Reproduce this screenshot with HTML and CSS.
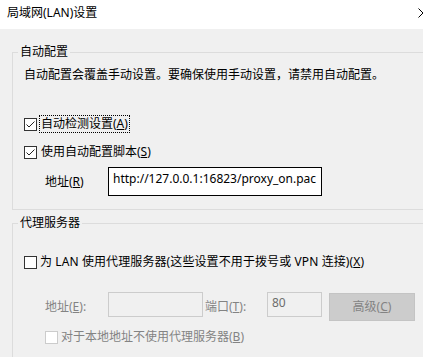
FILE: index.html
```html
<!DOCTYPE html>
<html>
<head>
<meta charset="utf-8">
<title>局域网(LAN)设置</title>
<link rel="stylesheet" href="styles.css">
</head>
<body>
<div class="titlebar">
  <span class="title">局域网(LAN)设置</span>
  <svg class="close" width="5" height="10" viewBox="0 0 5 10"><path d="M0.5 0.5 L9.5 9.5 M9.5 0.5 L0.5 9.5" stroke="#000" stroke-width="1" fill="none"/></svg>
</div>

<div class="main">
  <fieldset class="group auto">
    <legend>自动配置</legend>
    <div class="desc">自动配置会覆盖手动设置。要确保使用手动设置，请禁用自动配置。</div>

    <div class="check row-detect">
      <span class="box"><svg width="11" height="11" viewBox="0 0 11 11"><path d="M1.5 5.5 L4 8 L9.5 2.5" stroke="#222" stroke-width="1" fill="none"/></svg></span>
      <span class="focus">自动检测设置(<u>A</u>)</span>
    </div>

    <div class="check row-script">
      <span class="box"><svg width="11" height="11" viewBox="0 0 11 11"><path d="M1.5 5.5 L4 8 L9.5 2.5" stroke="#222" stroke-width="1" fill="none"/></svg></span>
      <span>使用自动配置脚本(<u>S</u>)</span>
    </div>

    <div class="addr-row">
      <span class="addr-label">地址(<u>R</u>)</span>
      <div class="url">http://127.0.0.1:16823/proxy_on.pac</div>
    </div>
  </fieldset>

  <fieldset class="group proxy">
    <legend>代理服务器</legend>

    <div class="check row-lan">
      <span class="box"></span>
      <span>为 LAN 使用代理服务器(这些设置不用于拨号或 VPN 连接)(<u>X</u>)</span>
    </div>

    <div class="server-row">
      <span class="dim lbl-addr">地址(<u>E</u>):</span>
      <div class="field f-addr"></div>
      <span class="dim lbl-port">端口(<u>T</u>):</span>
      <div class="field f-port">80</div>
      <div class="btn">高级(<u>C</u>)</div>
    </div>

    <div class="check row-local dim">
      <span class="box off"></span>
      <span>对于本地地址不使用代理服务器(<u>B</u>)</span>
    </div>
  </fieldset>
</div>
</body>
</html>
```

FILE: styles.css
```css
html, body {
  margin: 0;
  padding: 0;
}

body {
  width: 423px;
  height: 357px;
  overflow: hidden;
  background: #f0f0f0;
  font-family: "Noto Sans", "Noto Sans CJK SC", sans-serif;
  font-size: 12px;
  line-height: 16px;
  color: #000;
  display: flex;
  flex-direction: column;
}

u {
  text-decoration: underline;
  text-underline-offset: 1px;
}

.titlebar {
  height: 29px;
  flex: none;
  background: #fff;
  display: flex;
  align-items: center;
  justify-content: space-between;
  padding-left: 7px;
  padding-bottom: 3px;
  box-sizing: border-box;
}

.main {
  flex: 1;
  display: flex;
  flex-direction: column;
  padding-left: 12px;
  min-height: 0;
}

.group {
  margin: 0;
  padding: 0 0 0 11px;
  border: 1px solid #dcdcdc;
  border-right: none;
  min-width: 0;
}

.group legend {
  padding: 0 2px;
  margin-left: -6px;
  line-height: 16px;
}

.auto {
  margin-top: 15px;
  padding-bottom: 13px;
}

.proxy {
  margin-top: 5px;
  flex: 1;
  min-height: 0;
  border-bottom: none;
}

.desc {
  margin-top: 7px;
}

.check {
  display: flex;
  align-items: center;
  height: 16px;
}

.box {
  width: 11px;
  height: 11px;
  border: 1px solid #333;
  background: #fff;
  margin-right: 3px;
  display: flex;
}

.box.off {
  border-color: #cccccc;
}

.focus {
  outline: 1px dotted #000;
  outline-offset: 0;
  padding: 0 1px;
}

.row-detect {
  margin-top: 33px;
}

.row-script {
  margin-top: 12px;
}

.row-script .box {
  margin-right: 4px;
}

.addr-row {
  display: flex;
  align-items: center;
  margin-top: 7px;
  padding-left: 21px;
}

.addr-label {
  width: 63px;
}

.url {
  height: 29px;
  width: 214px;
  border: 1px solid #000;
  background: #fff;
  padding: 3px 0 0 4px;
  box-sizing: border-box;
  white-space: nowrap;
  overflow: hidden;
}

.row-lan {
  margin-top: 23px;
  letter-spacing: 0.1px;
}

.dim {
  color: #838383;
}

.server-row {
  display: flex;
  align-items: center;
  height: 29px;
  margin-top: 22px;
  padding-left: 21px;
}

.lbl-addr {
  width: 63px;
}

.field {
  align-self: flex-start;
  height: 25px;
  border: 1px solid #cccccc;
  box-sizing: border-box;
  background: #f0f0f0;
}

.f-addr {
  width: 95px;
  margin-right: 2px;
}

.lbl-port {
  width: 62px;
}

.f-port {
  width: 55px;
  padding: 2px 0 0 4px;
  color: #6d6d6d;
}

.btn {
  margin-left: 7px;
  align-self: flex-start;
  margin-top: 1px;
  width: 86px;
  height: 28px;
  box-sizing: border-box;
  background: #cccccc;
  border: 1px solid #c4c4c4;
  color: #838383;
  display: flex;
  align-items: center;
  justify-content: center;
}

.row-local {
  margin-top: 8px;
  padding-left: 21px;
}
```
